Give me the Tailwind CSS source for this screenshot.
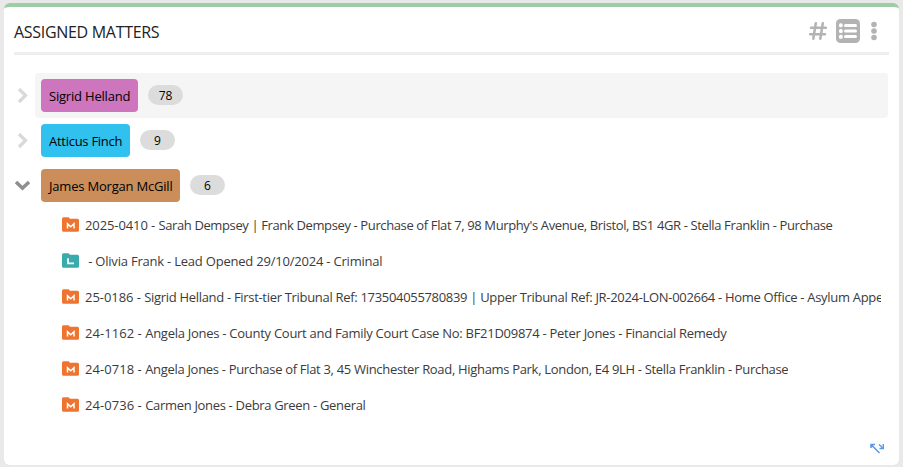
<!DOCTYPE html>
<html lang="en">
<head>
  <meta charset="UTF-8" />
  <meta name="viewport" content="width=device-width, initial-scale=1.0"/>
  <title>Assigned Matters</title>
  <script src="https://cdn.jsdelivr.net/npm/@tailwindcss/browser@4"></script>
</head>
<body class="h-screen overflow-hidden bg-[#e9e9e9] px-1 pt-[3px] pb-0.5 font-['Open_Sans','Noto_Sans',sans-serif] text-[13px] text-[#333]">

  <!-- Icons -->
  <svg class="hidden">
    <symbol id="matter" viewBox="0 0 17 15">
      <path fill="#ee742f" d="M1.5 .3h4.700q.8 0 1.200.7l.4.700h7.700Q17 1.700 17 3.200v10Q17 14.700 15.500 14.700h-14Q0 14.700 0 13.200V1.800Q0 .3 1.500 .3z"/>
      <path fill="none" stroke="#fff" stroke-width="1.500" d="M5.500 11.500V6.700L8.750 9.800 12 6.700V11.500"/>
    </symbol>
    <symbol id="lead" viewBox="0 0 17 15">
      <path fill="#3aabad" d="M1.5 .3h4.700q.8 0 1.200.7l.4.700h7.700Q17 1.700 17 3.200v10Q17 14.700 15.500 14.700h-14Q0 14.700 0 13.200V1.800Q0 .3 1.500 .3z"/>
      <path fill="none" stroke="#fff" stroke-width="1.700" d="M6 5.200V10.300h6"/>
    </symbol>
  </svg>

  <section class="relative h-full rounded-md border-t-4 border-[#9ecda5] bg-white px-2.5">
    <!-- Header -->
    <header class="flex h-12 items-center border-b-3 border-[#eee] pt-0.5">
      <h2 class="flex-1 pt-[3px] text-base tracking-[-0.3px] text-[#222]">ASSIGNED MATTERS</h2>
      <div class="flex items-center text-[#b3b3b3]">
        <svg class="h-[18px] w-[18px]" viewBox="0 0 18 18" fill="none" stroke="currentColor" stroke-width="2.500" stroke-linecap="round"><path d="M6.800 1.300L4.300 16.700M13.800 1.300L11.300 16.700M2 5.800h14.800M1.200 12.300H16"/></svg>
        <svg class="ml-[9px] h-6 w-6" viewBox="0 0 24 24"><rect width="24" height="24" rx="4.500" fill="currentColor"/><g fill="#fff"><rect x="3" y="4.300" width="3.700" height="4" rx="1.500"/><rect x="3" y="10" width="3.700" height="4" rx="1.500"/><rect x="3" y="15.700" width="3.700" height="4" rx="1.500"/><rect x="8" y="5" width="13" height="3" rx="1.500"/><rect x="8" y="10.500" width="13" height="3" rx="1.500"/><rect x="8" y="16" width="13" height="3" rx="1.500"/></g></svg>
        <svg class="mr-3 ml-[11px] h-5 w-[6px]" viewBox="0 0 6 20" fill="currentColor"><circle cx="3" cy="3.500" r="2.800"/><circle cx="3" cy="10" r="2.800"/><circle cx="3" cy="16.500" r="2.800"/></svg>
      </div>
    </header>

    <!-- Groups -->
    <main class="pt-[18px] text-black">
      <div class="flex h-[45px] items-center">
        <svg class="mr-[5px] h-4 w-4" viewBox="0 0 16 16" fill="none" stroke="#d9d9d9" stroke-width="3.200"><path d="M5 1L11.500 7.500 5 14"/></svg>
        <div class="mr-px flex h-full flex-1 items-center rounded bg-[#f5f5f5] pl-[6px]">
          <span class="flex h-[33px] w-[97px] items-center rounded bg-[#cd76bd] pl-2 pt-0.5 tracking-[-0.2px] whitespace-nowrap">Sigrid Helland</span>
          <span class="mb-px ml-2.5 h-5 w-[35px] rounded-full bg-[#dcdcdc] text-center text-xs leading-[22px]">78</span>
        </div>
      </div>
      <div class="flex h-[45px] items-center">
        <svg class="mr-[11px] h-4 w-4" viewBox="0 0 16 16" fill="none" stroke="#d9d9d9" stroke-width="3.200"><path d="M5 1L11.500 7.500 5 14"/></svg>
        <span class="flex h-[33px] w-[89px] items-center rounded bg-[#30c1ee] pl-2 pt-0.5 tracking-[-0.27px] whitespace-nowrap">Atticus Finch</span>
        <span class="mb-px ml-2.5 h-5 w-[35px] rounded-full bg-[#dcdcdc] text-center text-xs leading-[22px]">9</span>
      </div>
      <div class="flex h-[45px] items-center">
        <svg class="mr-[11px] h-4 w-4" viewBox="0 0 16 16" fill="none" stroke="#8f8f8f" stroke-width="3.500"><path d="M2 4L8.500 10.200 15 4"/></svg>
        <span class="flex h-[33px] w-[139px] items-center rounded bg-[#cb8e5a] pl-2 pt-0.5 tracking-[-0.2px] whitespace-nowrap">James Morgan McGill</span>
        <span class="mb-px ml-2.5 h-5 w-[35px] rounded-full bg-[#dcdcdc] text-center text-xs leading-[22px]">6</span>
      </div>

      <!-- Matters -->
      <ul class="mr-2 -mt-px ml-12 text-[#3b3b3b]">
        <li class="flex h-9 items-center gap-1.5">
          <svg class="mb-px h-[15px] w-[17px] shrink-0"><use href="#matter"/></svg>
          <span class="overflow-hidden pt-0.5 tracking-[-0.375px] whitespace-nowrap"><span class="tracking-[-0.1px]">2025-0410 - </span>Sarah Dempsey | Frank Dempsey - Purchase of Flat 7, 98 Murphy's Avenue, Bristol, BS1 4GR - Stella Franklin - Purchase</span>
        </li>
        <li class="flex h-9 items-center gap-1.5">
          <svg class="mb-px h-[15px] w-[17px] shrink-0"><use href="#lead"/></svg>
          <span class="overflow-hidden pt-0.5 tracking-[-0.21px] whitespace-nowrap">&nbsp;- Olivia Frank - Lead Opened 29/10/2024 - Criminal</span>
        </li>
        <li class="flex h-9 items-center gap-1.5">
          <svg class="mb-px h-[15px] w-[17px] shrink-0"><use href="#matter"/></svg>
          <span class="overflow-hidden pt-0.5 tracking-[-0.31px] whitespace-nowrap"><span class="tracking-[-0.05px]">25-0186 - </span>Sigrid Helland - First-tier Tribunal Ref: 173504055780839 | Upper Tribunal Ref: JR-2024-LON-002664 - Home Office - Asylum Appeal</span>
        </li>
        <li class="flex h-9 items-center gap-1.5">
          <svg class="mb-px h-[15px] w-[17px] shrink-0"><use href="#matter"/></svg>
          <span class="overflow-hidden pt-0.5 tracking-[-0.27px] whitespace-nowrap"><span class="tracking-[0.05px]">24-1162 - </span>Angela Jones - County Court and Family Court Case No: BF21D09874 - Peter Jones - Financial Remedy</span>
        </li>
        <li class="flex h-9 items-center gap-1.5">
          <svg class="mb-px h-[15px] w-[17px] shrink-0"><use href="#matter"/></svg>
          <span class="overflow-hidden pt-0.5 tracking-[-0.315px] whitespace-nowrap"><span class="tracking-[0.05px]">24-0718 - </span>Angela Jones - Purchase of Flat 3, 45 Winchester Road, Highams Park, London, E4 9LH - Stella Franklin - Purchase</span>
        </li>
        <li class="flex h-9 items-center gap-1.5">
          <svg class="mb-px h-[15px] w-[17px] shrink-0"><use href="#matter"/></svg>
          <span class="overflow-hidden pt-0.5 tracking-[-0.32px] whitespace-nowrap"><span class="tracking-[0.05px]">24-0736 - </span>Carmen Jones - Debra Green - General</span>
        </li>
      </ul>
    </main>

    <!-- Resize handle -->
    <svg class="absolute right-[15px] bottom-2.5 h-3.5 w-3.5" viewBox="0 0 14 14" fill="none" stroke="#5b97e8" stroke-width="1.500"><path d="M1 7V3.500h4M1 3.500L9.500 12M9 3.500l4 3.500M13.300 3v4.500H9.500"/></svg>
  </section>

</body>
</html>
